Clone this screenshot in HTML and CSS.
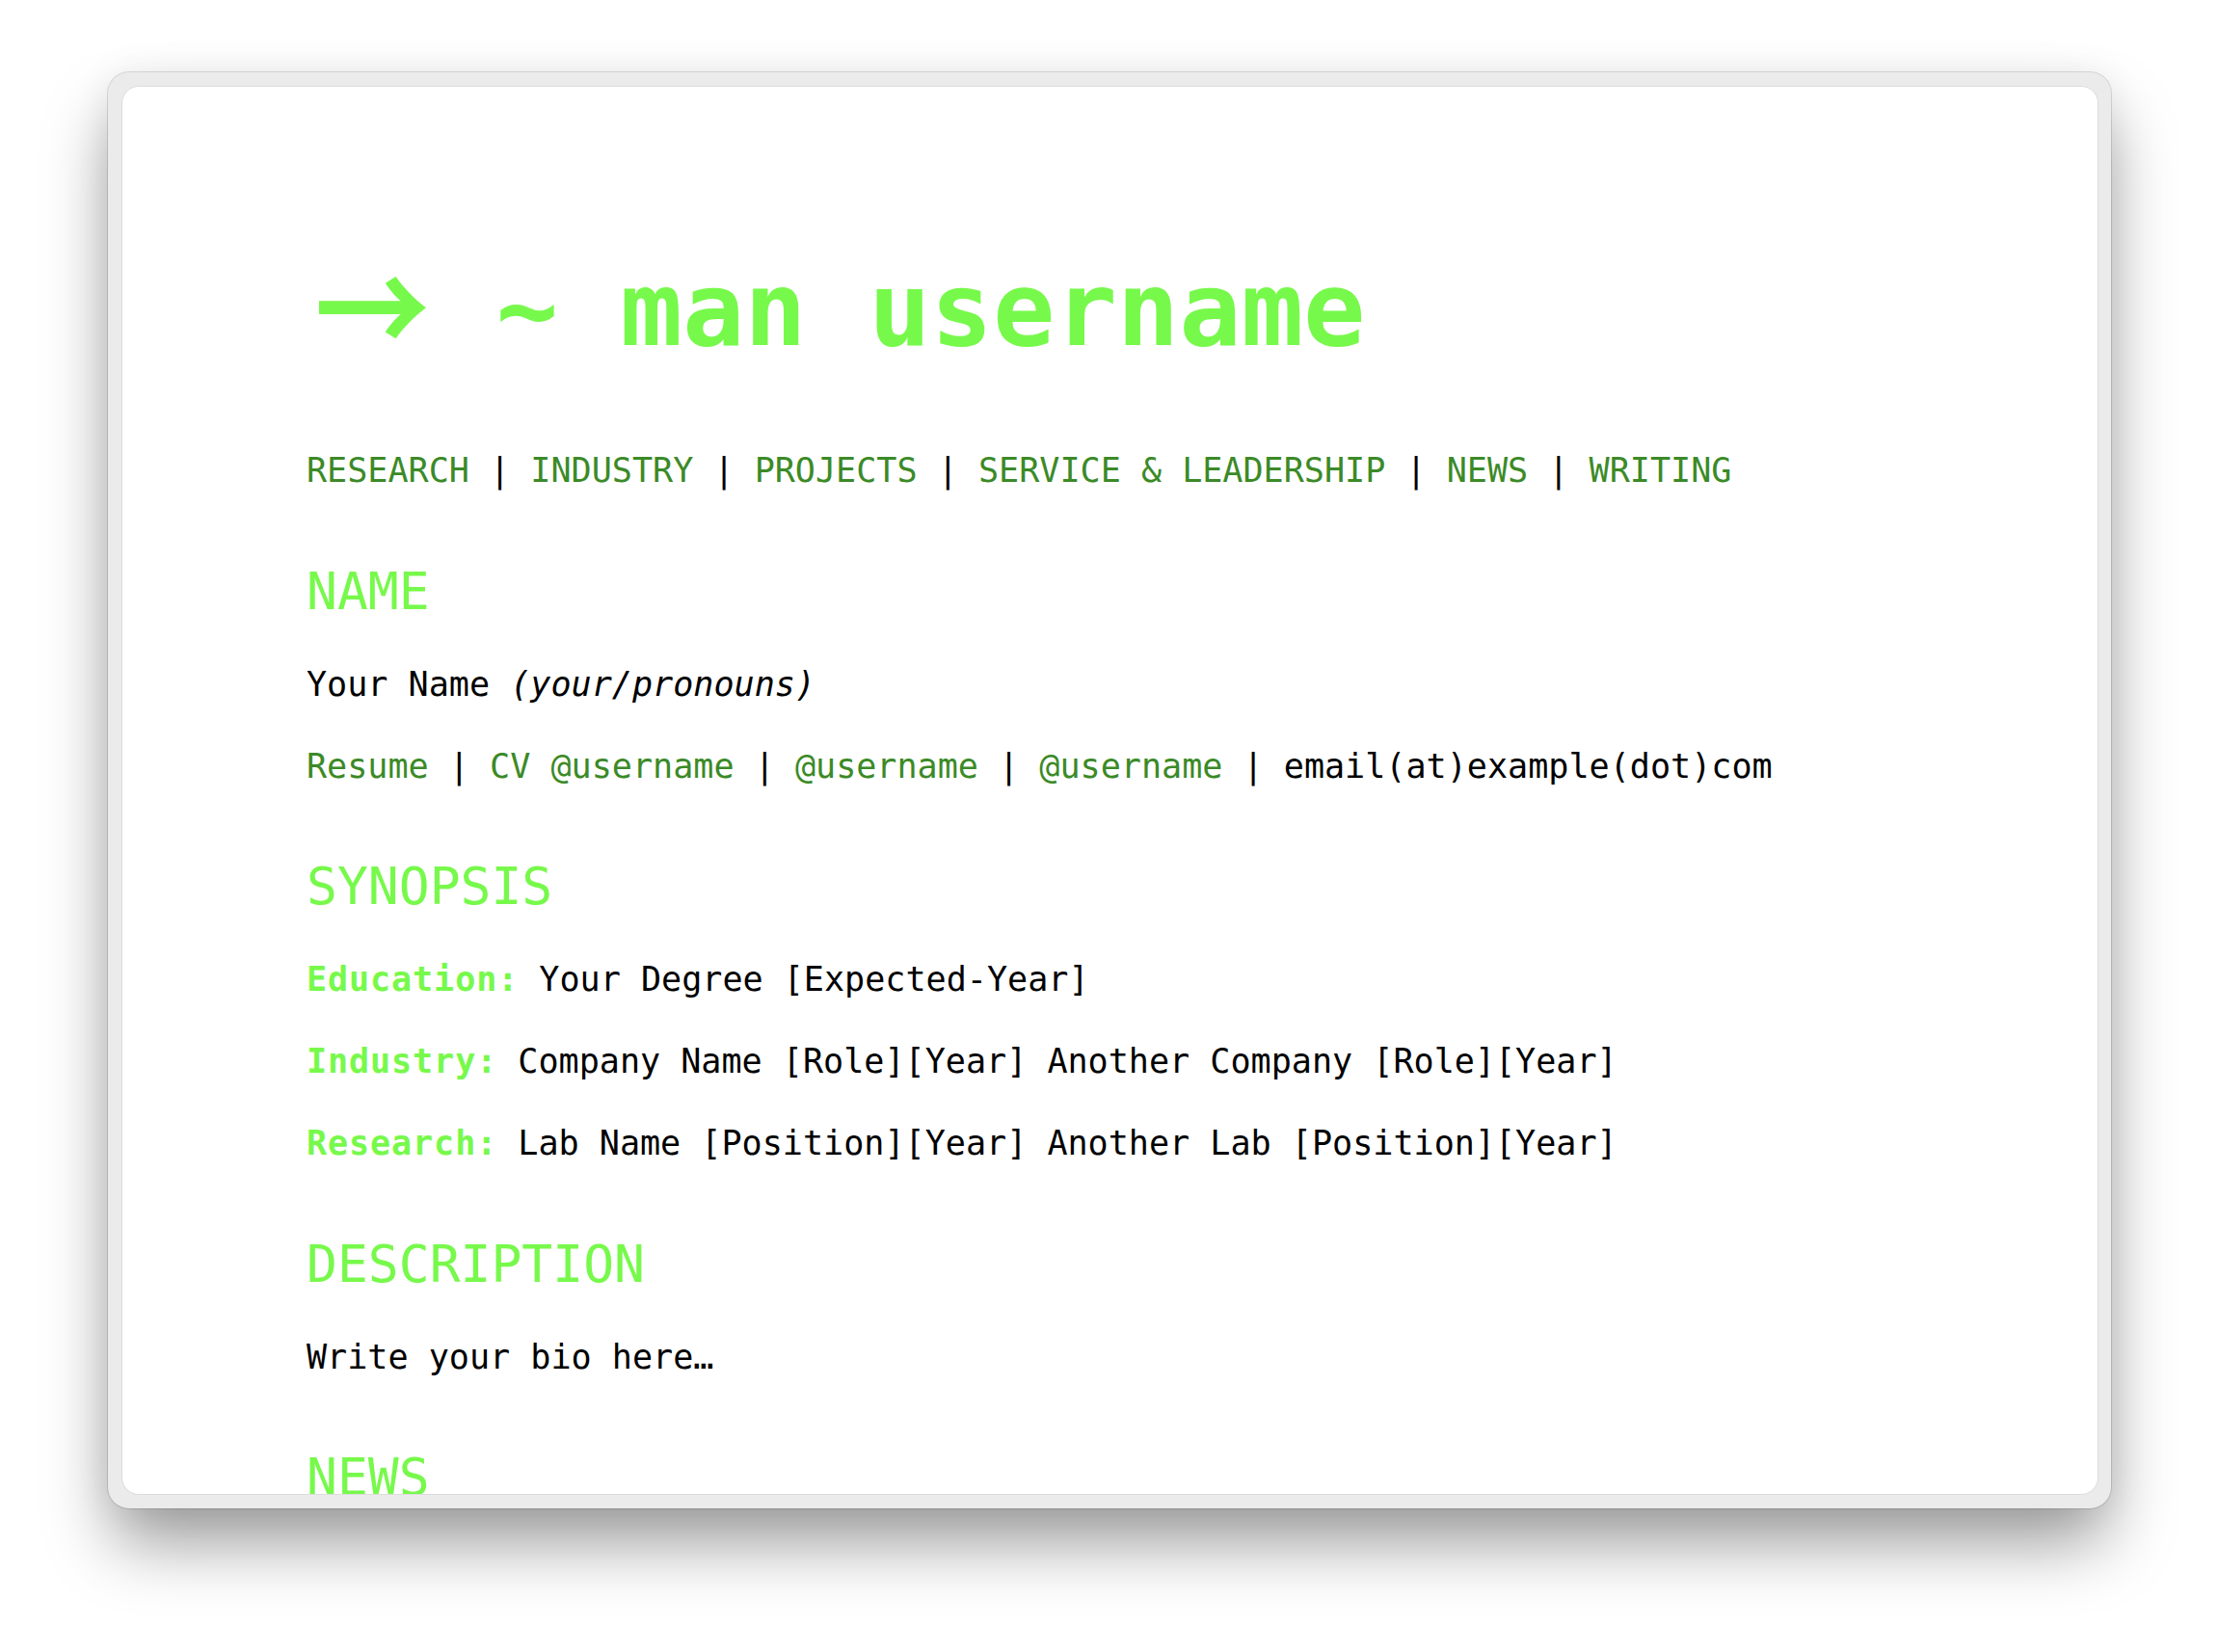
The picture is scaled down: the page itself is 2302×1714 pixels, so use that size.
FILE: index.html
```html
<!DOCTYPE html>
<html lang="en">
<head>
    <meta charset="UTF-8">
    <meta name="viewport" content="width=device-width, initial-scale=1.0">
    <title>man username</title>
    <link rel="stylesheet" href="styles.css">
</head>
<body>
    <div class="window">
        <div class="page">
            <h1 class="prompt"><span class="arrow">→</span> ~ man username</h1>

            <div class="nav">
                <a href="#research">RESEARCH</a> | <a href="#industry">INDUSTRY</a> | <a href="#projects">PROJECTS</a> | <a href="#service">SERVICE &amp; LEADERSHIP</a> | <a href="#news">NEWS</a> | <a href="#writing">WRITING</a>
            </div>

            <section>
                <h2>NAME</h2>
                <p>Your Name <em>(your/pronouns)</em></p>
                <p><a href="#">Resume</a> | <a href="#">CV</a> <a href="#">@username</a> | <a href="#">@username</a> | <a href="#">@username</a> | email(at)example(dot)com</p>
            </section>

            <section>
                <h2>SYNOPSIS</h2>
                <p><strong class="label">Education:</strong> Your Degree [Expected-Year]</p>
                <p><strong class="label">Industry:</strong> Company Name [Role][Year] Another Company [Role][Year]</p>
                <p><strong class="label">Research:</strong> Lab Name [Position][Year] Another Lab [Position][Year]</p>
            </section>

            <section>
                <h2>DESCRIPTION</h2>
                <p>Write your bio here…</p>
            </section>

            <section id="news">
                <h2>NEWS</h2>
            </section>
        </div>
    </div>
</body>
</html>
```

FILE: styles.css
```css
* {
    margin: 0;
    padding: 0;
    box-sizing: border-box;
}

html,
body {
    height: 100%;
}

body {
    min-height: 1714px;
    background: #fff;
    padding: 75px 0 0 112px;
    font-family: 'DejaVu Sans Mono', 'Liberation Mono', monospace;
    color: #000;
}

.window {
    width: 2078px;
    height: 1490px;
    padding: 14px 13px 14px 14px;
    background: #ebebeb;
    border-radius: 22px;
    box-shadow: 0 0 0 1px rgba(0, 0, 0, 0.12),
                0 40px 70px -5px rgba(0, 0, 0, 0.4),
                0 0 40px rgba(0, 0, 0, 0.06);
}

.page {
    height: 100%;
    background: #fff;
    border: 1px solid #dcdcdc;
    border-radius: 18px;
    overflow: hidden;
    padding: 166px 0 0 191px;
}

.prompt {
    font-size: 107px;
    font-weight: bold;
    line-height: 130px;
    color: #77f94b;
    margin-bottom: 77px;
}

/* the "->" ligature of the original font */
.arrow {
    display: inline-block;
    width: calc(2ch + 6px);
    line-height: 1;
    text-align: center;
    font-family: 'Noto Sans CJK JP', 'DejaVu Sans', sans-serif;
    transform: translateX(2px) scale(1.12, 1.25);
}

.nav,
p {
    font-size: 35.1px;
    line-height: 50px;
}

p {
    margin-bottom: 35px;
}

a {
    color: #3b8a27;
    text-decoration: none;
}

h2 {
    font-size: 53px;
    font-weight: normal;
    line-height: 64px;
    color: #77f94b;
    margin: 68.5px 0 39px;
}

em {
    font-style: italic;
}

.label {
    color: #77f94b;
    font-weight: bold;
    letter-spacing: 0.9px;
}
```
